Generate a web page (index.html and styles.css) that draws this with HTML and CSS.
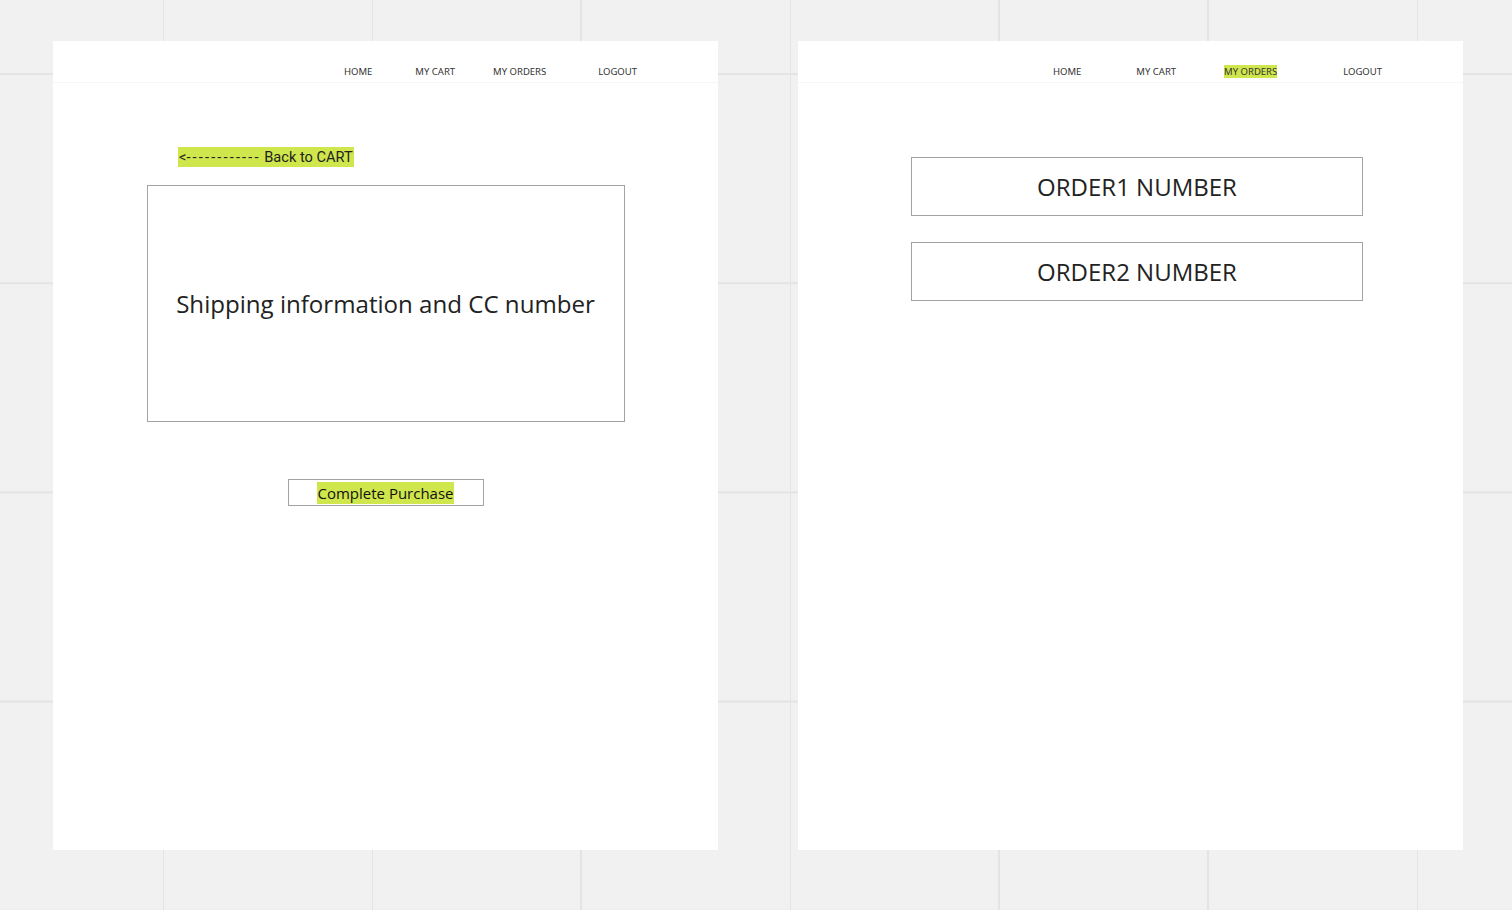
FILE: index.html
```html
<!DOCTYPE html>
<html lang="en">
<head>
<meta charset="utf-8">
<title>Checkout wireframes</title>
<link rel="stylesheet" href="styles.css">
</head>
<body>
<div class="board">
  <section class="frame">
    <header class="topbar">
      <nav class="nav nav-left">
        <span class="nav-item">HOME</span>
        <span class="nav-item">MY CART</span>
        <span class="nav-item">MY ORDERS</span>
        <span class="nav-item">LOGOUT</span>
      </nav>
    </header>
    <div class="checkout">
      <div class="back-row"><span class="hl back">&lt;<span class="dashes">------------</span> Back to CART</span></div>
      <div class="shipping-box">Shipping information and CC number</div>
      <div class="purchase-btn"><span class="hl">Complete Purchase</span></div>
    </div>
  </section>
  <section class="frame">
    <header class="topbar">
      <nav class="nav nav-right">
        <span class="nav-item">HOME</span>
        <span class="nav-item">MY CART</span>
        <span class="nav-item hl">MY ORDERS</span>
        <span class="nav-item">LOGOUT</span>
      </nav>
    </header>
    <div class="orders">
      <div class="order-box">ORDER1 NUMBER</div>
      <div class="order-box">ORDER2 NUMBER</div>
    </div>
  </section>
</div>
</body>
</html>
```
FILE: styles.css
```css
* { box-sizing: border-box; }
html, body { margin: 0; padding: 0; }
body {
  width: 1512px;
  height: 910px;
  overflow: hidden;
  background-color: #f1f1f1;
  background-image:
    linear-gradient(to right, #e4e4e4 0, #e4e4e4 2px, transparent 2px),
    linear-gradient(to bottom, #e4e4e4 0, #e4e4e4 2px, transparent 2px);
  background-size: 209px 209.2px;
  background-position: 162px 73px;
  font-family: "Open Sans", "Noto Sans", sans-serif;
  color: #222;
}
.board {
  display: flex;
  gap: 80px;
  padding: 41px 0 0 53px;
}
.frame {
  width: 665px;
  height: 809px;
  background: #fff;
  display: flex;
  flex-direction: column;
}
.topbar {
  height: 42px;
  border-bottom: 1px solid #f6f6f6;
  display: flex;
  align-items: center;
}
.nav {
  display: flex;
  align-items: center;
  font-family: "Noto Sans", sans-serif;
  font-size: 9.5px;
  color: #333;
  line-height: 13px;
  padding-top: 20px;
}
.nav-item { white-space: nowrap; }
.nav-left { padding-left: 291px; }
.nav-left .nav-item:nth-child(2) { margin-left: 43px; }
.nav-left .nav-item:nth-child(3) { margin-left: 38px; }
.nav-left .nav-item:nth-child(4) { margin-left: 52px; }
.nav-right { padding-left: 255px; }
.nav-right .nav-item:nth-child(2) { margin-left: 55px; }
.nav-right .nav-item:nth-child(3) { margin-left: 48px; }
.nav-right .nav-item:nth-child(4) { margin-left: 66px; }
.hl { background: #cfe64c; }
.checkout {
  display: flex;
  flex-direction: column;
  align-items: center;
}
.back-row {
  align-self: stretch;
  padding-left: 125px;
  margin-top: 64px;
  display: flex;
}
.back {
  font-family: "Roboto", sans-serif;
  font-size: 14.6px;
  line-height: 20px;
  color: #222;
  padding: 0 1px;
  white-space: nowrap;
}
.dashes { letter-spacing: 2.15px; }
.shipping-box {
  margin-top: 18px;
  width: 478px;
  height: 237px;
  border: 1px solid #a3a3a3;
  display: flex;
  align-items: center;
  justify-content: center;
  font-size: 24.1px;
  color: #222;
}
.purchase-btn {
  margin-top: 57px;
  width: 196px;
  height: 27px;
  border: 1px solid #a3a3a3;
  display: flex;
  align-items: center;
  justify-content: center;
  font-size: 15px;
  line-height: 22px;
  color: #111;
}
.orders {
  display: flex;
  flex-direction: column;
  gap: 26px;
  padding: 74px 0 0 113px;
}
.order-box {
  width: 452px;
  height: 59px;
  border: 1px solid #a3a3a3;
  display: flex;
  align-items: center;
  justify-content: center;
  font-size: 24px;
  color: #222;
}
```
